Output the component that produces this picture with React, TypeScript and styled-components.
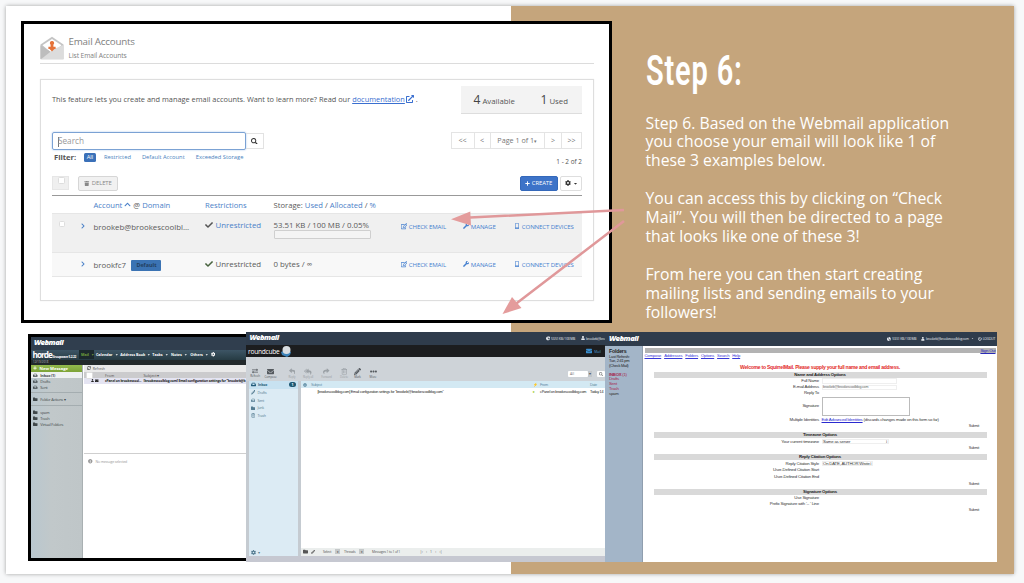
import React from "react";
import styled, { createGlobalStyle, css } from "styled-components";
import {
  FaSearch, FaTrash, FaPlus, FaCog, FaChevronRight, FaChevronUp, FaCheck, FaWrench, FaCaretDown,
  FaInbox, FaPencilAlt, FaFolder, FaUser, FaPowerOff, FaRegEdit, FaMobileAlt, FaExternalLinkAlt,
  FaSyncAlt, FaReply, FaReplyAll, FaShare, FaEllipsisH, FaEnvelope, FaInfoCircle, FaRegTrashAlt,
  FaExchangeAlt, FaChartPie,
} from "react-icons/fa";

const Global = createGlobalStyle`
  * { box-sizing: border-box; }
  html, body { margin: 0; padding: 0; }
  body { width: 1024px; height: 583px; overflow: hidden; background: #f7f8f9; font-family: "Open Sans", sans-serif; }
  svg { display: block; flex: none; }
`;

/* ---------- slide ---------- */
const Page = styled.div`
  height: 583px;
  padding: 6px 10px 9px 6px;
`;
const Slide = styled.main`
  position: relative;
  height: 568px;
  display: grid;
  grid-template-columns: 505px 1fr;
  background: #fff;
  box-shadow: 0 0 4px rgba(0, 0, 0, 0.35);
`;
const Notes = styled.section`
  grid-column: 2;
  background: #c5a57c;
  color: #fff;
  padding: 43.5px 0 0 134.5px;
`;
const StepTitle = styled.h1`
  margin: 0 0 8px;
  height: 56px;
  font: 600 42px/42px Roboto, sans-serif;
  letter-spacing: 1.2px;
  transform: scaleX(0.69);
  transform-origin: 0 0;
  white-space: nowrap;
`;
const Para = styled.p`
  margin: 0 0 19px;
  font-size: 15.74px;
  line-height: 18.95px;
  white-space: pre;
`;
const Shot = styled.section<{ $x: number; $y: number; $w: number; $h: number; $frame?: boolean; $open?: boolean }>`
  position: absolute;
  left: ${(p) => p.$x}px;
  top: ${(p) => p.$y}px;
  width: ${(p) => p.$w}px;
  height: ${(p) => p.$h}px;
  overflow: hidden;
  background: #fff;
  ${(p) => p.$frame && css`border: 3px solid #000;`}
  ${(p) => p.$open && css`border-right: 0;`}
`;
const Arrows = styled.svg`
  position: absolute;
  left: 0;
  top: 0;
  pointer-events: none;
`;

/* ---------- cPanel ---------- */
const Cpanel = styled.div`
  padding: 11.5px 15px 0 16px;
  color: #555;
  white-space: nowrap;
`;
const CpHeader = styled.header`
  display: flex;
  height: 28.5px;
  border-bottom: 1px solid #dcdcdc;
  gap: 4.5px;
`;
const CpTitle = styled.div`
  font-size: 9.8px;
  line-height: 11.5px;
  letter-spacing: -0.2px;
  color: #808080;
  small { display: block; font-size: 6.7px; line-height: 14px; margin-top: 1.5px; letter-spacing: -0.08px; }
`;
const Panel = styled.div`
  margin-top: 15px;
  height: 222px;
  border: 1px solid #dedede;
  padding: 6px 11px 0;
  box-shadow: 0 0 1px #e5e5e5;
`;
const Bar = styled.div<{ $h: number; $mt?: number }>`
  display: flex;
  align-items: center;
  justify-content: space-between;
  height: ${(p) => p.$h}px;
  margin-top: ${(p) => p.$mt ?? 0}px;
`;
const Group = styled.div<{ $gap?: number }>`
  display: flex;
  align-items: center;
  gap: ${(p) => p.$gap ?? 0}px;
`;
const Intro = styled.div`
  display: flex;
  align-items: center;
  font-size: 7.38px;
  height: 26px;
  margin-top: -1.5px;
  a { color: #3a6fd0; text-decoration: underline; margin: 0 1px 0 2px; }
  svg { color: #3a6fd0; margin-right: 2px; }
`;
const Stats = styled.div`
  display: flex;
  align-items: center;
  justify-content: space-between;
  width: 121.5px;
  height: 27.5px;
  padding: 0 14px 0 13px;
  background: #f3f3f3;
  border-bottom: 1px solid #ddd;
  font-size: 7.8px;
  b { font-weight: 400; font-size: 12px; margin-right: 2px; color: #444; }
  span { display: flex; align-items: baseline; }
`;
const Search = styled.div`
  width: 194px;
  height: 18px;
  border: 1.4px solid #7ba2d4;
  border-radius: 2px;
  box-shadow: 0 0 2px #9fc0ea;
  font-size: 8.2px;
  line-height: 15px;
  color: #999;
  padding-left: 4.5px;
  &::before { content: ""; display: inline-block; width: 1px; height: 10px; background: #777; vertical-align: middle; margin-right: -0.5px; }
`;
const SearchBtn = styled.div`
  display: grid;
  place-items: center;
  width: 18px;
  height: 16px;
  border: 1px solid #e2e2e2;
  border-left: 0;
  color: #333;
`;
const Pager = styled.div`
  display: grid;
  grid-template-columns: 22px 16px 54.5px 17px 20px;
  height: 17px;
  border: 1px solid #e4e4e4;
  font-size: 7.2px;
  line-height: 15px;
  text-align: center;
  color: #777;
  span + span { border-left: 1px solid #e4e4e4; }
  small { font-size: 5px; }
`;
const Filter = styled.div`
  display: flex;
  align-items: center;
  font-size: 5.75px;
  color: #4a7fbe;
  padding-left: 2px;
  b { font-size: 7.6px; color: #555; width: 30px; }
  i { font-style: normal; background: #3a70b8; color: #fff; border-radius: 1.5px; width: 12px; height: 9.5px; line-height: 9.5px; text-align: center; margin-right: 8px; }
  span { margin-right: 11px; }
`;
const Count = styled.span`margin-top: 9px; font-size: 6.4px;`;
const Box = styled.span`
  width: 6.5px;
  height: 6.5px;
  background: #fff;
  border: 0.5px solid #ddd;
  border-radius: 1.5px;
`;
const BoxCell = styled.div`
  width: 17px;
  height: 14px;
  background: #efefef;
  border: 1px solid #e6e6e6;
  padding: 0 0 0 5px;
  display: flex;
`;
const RowBox = styled.div`
  padding: 1px 0 0 6.5px;
  display: flex;
  height: 8px;
`;
const Btn = styled.div<{ $w: number; $kind?: "primary" | "muted" }>`
  display: flex;
  align-items: center;
  justify-content: center;
  gap: 2px;
  width: ${(p) => p.$w}px;
  height: 15px;
  border-radius: 2px;
  font-size: 5.9px;
  letter-spacing: -0.1px;
  border: 1px solid #dedede;
  color: #333;
  ${(p) => p.$kind === "primary" && css`background: #3d73c8; border-color: #3468ba; color: #fff;`}
  ${(p) => p.$kind === "muted" && css`background: #f1f1f1; border-color: #d6d6d6; color: #888;`}
`;
const Row = styled.div<{ $h: number; $bg?: string; $head?: boolean }>`
  display: grid;
  grid-template-columns: 28px 13.5px 111.5px 68.5px 127px 62.5px 51px 1fr;
  height: ${(p) => p.$h}px;
  background: ${(p) => p.$bg ?? "transparent"};
  font-size: ${(p) => (p.$head ? 7.65 : 7.85)}px;
  line-height: 10px;
  border-bottom: 0.5px solid #e6e6e6;
  padding-top: ${(p) => (p.$head ? 4 : 5.5)}px;
  ${(p) => p.$head && css`border-top: 1px solid #999;`}
  svg { margin-top: 1.5px; }
`;
const Cell = styled.div<{ $dy?: number; $blue?: boolean; $gap?: number }>`
  display: flex;
  gap: ${(p) => p.$gap ?? 2.5}px;
  padding-top: ${(p) => p.$dy ?? 0}px;
  height: ${(p) => 10 + (p.$dy ?? 0)}px;
  color: ${(p) => (p.$blue ? "#4a80c8" : "#5a5a5a")};
  em { font-style: normal; color: #4a80c8; }
`;
const Action = styled(Cell)`
  font-size: 6.1px;
  letter-spacing: -0.12px;
  color: #4680cf;
  gap: 1.8px;
`;
const Meter = styled.div`
  width: 97.5px;
  height: 9.5px;
  border: 1px solid #cfcfcf;
  border-radius: 1px;
  background: #f4f4f4;
`;
const Tag = styled.span`
  width: 30px;
  height: 11.5px;
  margin: 0 0 0 3px;
  background: #3b73b3;
  color: #23405f;
  font-size: 5.4px;
  font-weight: 700;
  line-height: 11px;
  text-align: center;
  border-radius: 1px;
`;

/* ---------- shared webmail pieces ---------- */
const Fill = styled.div<{ $h: number; $bg: string; $pad?: string; $c?: string; $fs?: number }>`
  display: flex;
  align-items: center;
  height: ${(p) => p.$h}px;
  background: ${(p) => p.$bg};
  padding: ${(p) => p.$pad ?? 0};
  color: ${(p) => p.$c ?? "#fff"};
  font-size: ${(p) => p.$fs ?? 4}px;
  white-space: nowrap;
`;
const Brand = styled.span`
  font: italic 800 7.6px/1 "Open Sans", sans-serif;
  letter-spacing: -0.5px;
  width: 29px;
  color: #fff;
`;
const Account = styled.div<{ $gap?: number }>`
  display: flex;
  align-items: center;
  gap: 1px;
  margin-left: ${(p) => p.$gap ?? 5}px;
  color: #e3e7ec;
  font-size: 3.4px;
  letter-spacing: -0.28px;
`;
const Push = styled.div`flex: 1;`;
const Split = styled.div<{ $side: number; $h: number }>`
  display: grid;
  grid-template-columns: ${(p) => p.$side}px 1fr;
  height: ${(p) => p.$h}px;
  white-space: nowrap;
`;

/* ---------- horde ---------- */
const HordeName = styled.span`
  font: 700 8.2px/9px "Open Sans", sans-serif;
  letter-spacing: -0.95px;
  width: 20px;
`;
const HordeVersion = styled.small`
  width: 26.5px;
  padding-top: 4px;
  font-size: 3.2px;
  font-weight: 700;
  letter-spacing: -0.26px;
`;
const HordeTab = styled.span<{ $w: number; $on?: boolean }>`
  display: flex;
  align-items: center;
  gap: 2px;
  width: ${(p) => p.$w}px;
  height: 9px;
  font-size: 3.7px;
  font-weight: 700;
  ${(p) => p.$on && css`background: #1c2a2d; color: #71a23c; padding-left: 2px; margin-right: 2px;`}
`;
const HordeSide = styled.aside`
  background: linear-gradient(90deg, #b9c7cf, #c1c8ca 40%, #bfc6c8);
  border-right: 1px solid #a9b0b2;
  color: #3f474a;
  font-size: 3.9px;
`;
const SideRow = styled.div<{ $h?: number; $on?: boolean; $rule?: boolean }>`
  display: flex;
  align-items: center;
  gap: 2.8px;
  height: ${(p) => p.$h ?? 6.3}px;
  padding-left: 2px;
  letter-spacing: -0.22px;
  background: ${(p) => (p.$on ? "#eef1f2" : "transparent")};
  ${(p) => p.$rule && css`border-bottom: 0.7px solid #a4adb0;`}
`;
const NewMessage = styled.div`
  display: flex;
  align-items: center;
  gap: 2.5px;
  height: 7.5px;
  padding-left: 2px;
  background: linear-gradient(#93b94d, #7da338);
  color: #fff;
  font-size: 4.2px;
  font-weight: 700;
`;
const HordeMain = styled.div`padding-left: 1px;`;
const HordeRow = styled.div<{ $h: number; $bg: string; $strong?: boolean }>`
  display: grid;
  grid-template-columns: 5px 14px 38.5px 1fr;
  align-items: center;
  height: ${(p) => p.$h}px;
  padding-left: 2px;
  background: ${(p) => p.$bg};
  color: ${(p) => (p.$strong ? "#222" : "#555")};
  font-size: ${(p) => (p.$strong ? 3.4 : 3.8)}px;
  font-weight: ${(p) => (p.$strong ? 700 : 400)};
  letter-spacing: ${(p) => (p.$strong ? -0.19 : 0)}px;
  span { display: flex; gap: 1px; }
`;
const Preview = styled.div`
  margin-top: 69.5px;
  border-top: 1.5px solid #cfcfcf;
  padding: 5px 0 0 4px;
  display: flex;
  align-items: center;
  gap: 3px;
  color: #999;
  font-size: 3.5px;
  letter-spacing: -0.15px;
`;

/* ---------- roundcube ---------- */
const RcBrand = styled.span`
  width: 31.5px;
  font-size: 6.6px;
  letter-spacing: -0.25px;
`;
const RcShell = styled.div`
  display: grid;
  grid-template-columns: 49.5px 1fr;
  column-gap: 3px;
  padding: 0 0 0 2.5px;
  height: 175px;
  background: #c5cbd1;
  white-space: nowrap;
`;
const RcSide = styled.aside`
  display: flex;
  flex-direction: column;
  background: #dcebf4;
  color: #557c91;
  font-size: 3.5px;
  letter-spacing: -0.15px;
`;
const RcFolder = styled.div<{ $on?: boolean }>`
  display: flex;
  align-items: center;
  gap: 2.5px;
  height: 7.7px;
  padding: 0 2px;
  ${(p) => p.$on && css`background: #c8e2f1; color: #205a7a; font-weight: 700;`}
  u { margin-left: auto; text-decoration: none; width: 7px; height: 5px; border-radius: 3px; background: #1d5873; color: #fff; text-align: center; line-height: 5px; font-size: 3.5px; }
`;
const RcTool = styled.div<{ $w: number; $on?: boolean }>`
  display: flex;
  flex-direction: column;
  align-items: center;
  gap: 1px;
  width: ${(p) => p.$w}px;
  color: ${(p) => (p.$on ? "#555a5f" : "#9ba1a6")};
  font-size: 3px;
  line-height: 3.5px;
  letter-spacing: -0.15px;
`;
const RcField = styled.div<{ $w: number }>`
  display: flex;
  align-items: center;
  width: ${(p) => p.$w}px;
  height: 6px;
  background: #fff;
  border-radius: 1px;
  color: #777;
  font-size: 3.6px;
  line-height: 6px;
  padding: 0 2px;
`;
const RcList = styled.div`
  display: flex;
  flex-direction: column;
  min-width: 0;
  background: #fff;
`;
const RcRow = styled.div<{ $head?: boolean }>`
  display: grid;
  grid-template-columns: 8px 6.5px 215px 7.5px 50px 1fr;
  align-items: center;
  height: 7px;
  padding-left: 2px;
  font: 3.75px "Liberation Sans", Arial, sans-serif;
  color: ${(p) => (p.$head ? "#5c8aa2" : "#222")};
  background: ${(p) => (p.$head ? "#d3e9f3" : "#fff")};
  b { color: #9aca2c; }
  span { letter-spacing: -0.24px; }
`;
const RcFooter = styled.div`
  display: grid;
  grid-template-columns: 8px 12px 12px 9px 15px 13px 48px 1fr;
  align-items: center;
  height: 8.5px;
  margin-top: auto;
  padding-left: 2px;
  background: #ebeeed;
  color: #555;
  font-size: 3.4px;
  letter-spacing: -0.2px;
  mark { width: 5px; background: #c5c9ca; color: #333; text-align: center; }
`;

/* ---------- squirrelmail ---------- */
const SqSide = styled.aside`
  background: #a3b5c8;
  border-right: 1px solid #8f9eae;
  padding: 2px 0 0 4px;
  font: 4px/4.5px "Liberation Sans", Arial, sans-serif;
  letter-spacing: -0.25px;
  color: #222;
  h4 { margin: 0; font-size: 5.3px; line-height: 7px; }
  p { margin: 0; white-space: pre; }
  ul { list-style: none; margin: 4.5px 0 0; padding: 0; line-height: 4.9px; font-size: 4.3px; color: #a62a4e; }
  li:last-child { color: #333; }
`;
const SqMain = styled.div`
  padding: 2.5px 1.5px 0 2px;
  font: 4.3px/6px "Liberation Sans", Arial, sans-serif;
  letter-spacing: -0.2px;
  color: #333;
`;
const SqTop = styled.div`
  background: #b3b3b3;
  height: 5.3px;
  line-height: 5.3px;
  text-align: right;
  color: #2a2ab8;
  text-decoration: underline;
`;
const SqMenu = styled.nav`
  display: flex;
  gap: 2.9px;
  height: 7px;
  color: #3838d8;
  font-size: 4.2px;
  letter-spacing: -0.17px;
  text-decoration: underline;
`;
const SqWelcome = styled.div`
  margin: 3.3px 0 2.5px 95.5px;
  color: #e22828;
  font-size: 5.1px;
  font-weight: 700;
  letter-spacing: -0.27px;
`;
const SqSection = styled.section<{ $h: number }>`
  width: 333px;
  height: ${(p) => p.$h}px;
  margin-left: 9px;
  header { background: #d9d9d9; height: 5.8px; line-height: 5.8px; text-align: center; font-weight: 700; color: #222; }
`;
const SqField = styled.div<{ $h?: number }>`
  display: grid;
  grid-template-columns: 165.5px 1fr;
  column-gap: 2.5px;
  align-items: center;
  height: ${(p) => p.$h ?? 6.3}px;
  label { text-align: right; }
  a { color: #2a2ad0; text-decoration: underline; }
`;
const Input = styled.span<{ $w: number; $area?: boolean }>`
  display: flex;
  justify-content: space-between;
  align-items: center;
  width: ${(p) => p.$w}px;
  height: ${(p) => (p.$area ? 19.5 : 5.5)}px;
  border: 1px solid ${(p) => (p.$area ? "#bbb" : "#efefef")};
  padding-left: 0.5px;
  line-height: 4px;
  small { font-size: 3.6px; color: #666; }
`;
const Submit = styled.div<{ $mt?: number }>`
  margin-top: ${(p) => p.$mt ?? 0}px;
  text-align: right;
  padding-right: 7.5px;
  font-size: 3.7px;
`;

function MailLogo() {
  return (
    <svg width="24" height="24" viewBox="0 0 24 24">
      <path d="M0.5 8.5 12 0.8l11.5 7.7v14.8h-23z" fill="#c4c4c4" />
      <path d="M2.5 9.2 12 3l9.5 6.2-9.5 8z" fill="#fff" />
      <path d="M0.5 9.5v13.6L11 16z" fill="#bdbdbd" />
      <path d="M1 23.3 14 13l9.5-4v14.3z" fill="#dcdcdc" />
      <path d="M12 5a2.1 2.1 0 0 1 1.4 3.7v2h2.2v2.2h-1.2L12 15.6l-2.4-2.7H8.4v-2.2h2.2v-2A2.1 2.1 0 0 1 12 5z" fill="#e5733a" />
    </svg>
  );
}

function Actions({ dy }: { dy: number }) {
  return (
    <>
      <Action $dy={dy}><FaRegEdit size={6.5} />CHECK EMAIL</Action>
      <Action $dy={dy}><FaWrench size={6} />MANAGE</Action>
      <Action $dy={dy}><FaMobileAlt size={6} />CONNECT DEVICES</Action>
    </>
  );
}

function EmailAccounts() {
  return (
    <Cpanel>
      <CpHeader><MailLogo /><CpTitle>Email Accounts<small>List Email Accounts</small></CpTitle></CpHeader>
      <Panel>
        <Bar $h={27.5}>
          <Intro>This feature lets you create and manage email accounts. Want to learn more? Read our <a>documentation</a><FaExternalLinkAlt size={8} />.</Intro>
          <Stats><span><b>4</b>Available</span><span><b>1</b>Used</span></Stats>
        </Bar>
        <Bar $h={18} $mt={18.3}>
          <Group><Search>Search</Search><SearchBtn><FaSearch size={6.5} /></SearchBtn></Group>
          <Pager><span>&lt;&lt;</span><span>&lt;</span><span>Page 1 of 1<small>▾</small></span><span>&gt;</span><span>&gt;&gt;</span></Pager>
        </Bar>
        <Bar $h={10} $mt={2.7}>
          <Filter><b>Filter:</b><i>All</i><span>Restricted</span><span>Default Account</span><span>Exceeded Storage</span></Filter>
          <Count>1 - 2 of 2</Count>
        </Bar>
        <Bar $h={15} $mt={13.3}>
          <Group $gap={9}><BoxCell><Box /></BoxCell><Btn $w={40} $kind="muted"><FaTrash size={5.5} />DELETE</Btn></Group>
          <Group $gap={2.5}><Btn $w={38} $kind="primary"><FaPlus size={5} />CREATE</Btn><Btn $w={22}><FaCog size={6} /><FaCaretDown size={5} /></Btn></Group>
        </Bar>
        <Bar $h={4.2} />
        <Row $h={19.5} $head>
          <span /><span />
          <Cell $gap={2}><em>Account</em><em><FaChevronUp size={7} /></em>@ <em>Domain</em></Cell>
          <Cell $blue>Restrictions</Cell>
          <Cell $gap={2}>Storage: <em>Used</em> / <em>Allocated</em> / <em>%</em></Cell>
        </Row>
        <Row $h={39} $bg="#f0f0f0">
          <RowBox><Box /></RowBox>
          <Cell $dy={2} $blue><FaChevronRight size={6} /></Cell>
          <Cell $dy={2}>brookeb@brookescoolbl...</Cell>
          <Cell $blue><FaCheck size={8} color="#555" />Unrestricted</Cell>
          <div><Cell>53.51 KB / 100 MB / 0.05%</Cell><Meter /></div>
          <Actions dy={2} />
        </Row>
        <Row $h={24} $bg="#f8f8f8">
          <span />
          <Cell $dy={1} $blue><FaChevronRight size={6} /></Cell>
          <Cell $dy={0.7}>brookfc7 <Tag>Default</Tag></Cell>
          <Cell><FaCheck size={8} color="#48633f" />Unrestricted</Cell>
          <Cell>0 bytes / ∞</Cell>
          <Actions dy={1} />
        </Row>
      </Panel>
    </Cpanel>
  );
}

const hordeTabs = [["Calendar", 24.3], ["Address Book", 32], ["Tasks", 18.6], ["Notes", 19.4], ["Others", 20.6]] as const;

function Horde() {
  return (
    <>
      <Fill $h={12.5} $bg="#303e4e" $pad="0 3px"><Brand>Webmail</Brand></Fill>
      <Fill $h={10} $bg="linear-gradient(#3d5565, #263b43)" $pad="0 0 0 1.5px">
        <HordeName>horde</HordeName><HordeVersion>Groupware 5.2.22</HordeVersion>
        <HordeTab $w={15} $on>Mail <FaCaretDown size={3.5} /></HordeTab>
        {hordeTabs.map(([t, w]) => (
          <HordeTab key={t} $w={w}>{t}<FaCaretDown size={3.5} /></HordeTab>
        ))}
        <FaCog size={4.5} />
      </Fill>
      <Fill $h={5} $bg="#23292b" $pad="0 2px" $c="#b9bfc1" $fs={2.9}>12/19/2018</Fill>
      <Split $side={52} $h={193}>
        <HordeSide>
          <NewMessage><FaPlus size={4} />New Message</NewMessage>
          <SideRow $on><FaInbox size={4.5} /><b>Inbox (1)</b></SideRow>
          <SideRow><FaInbox size={4.5} />Drafts</SideRow>
          <SideRow><FaInbox size={4.5} />Sent</SideRow>
          <SideRow $h={2.5} $rule />
          <SideRow $h={12}><FaFolder size={4.5} />Folder Actions ▾</SideRow>
          <SideRow $h={0.7} $rule />
          <SideRow $h={2.5} />
          <SideRow><FaFolder size={4.5} />spam</SideRow>
          <SideRow><FaFolder size={4.5} />Trash</SideRow>
          <SideRow><FaFolder size={4.5} />Virtual Folders</SideRow>
        </HordeSide>
        <HordeMain>
          <Fill $h={7.5} $bg="#e9e9e9" $c="#555" $fs={3.4} $pad="0 0 0 3px"><FaSyncAlt size={4} />&nbsp; Refresh</Fill>
          <HordeRow $h={6} $bg="#cbcbcd"><Box /><span /><span>From</span><span>Subject ▾</span></HordeRow>
          <HordeRow $h={5.5} $bg="#e4e4f2" $strong><span /><span><FaUser size={3} /><FaEnvelope size={3.5} /></span><span>cPanel on brookescool...</span><span>[brookescoolblog.com] Email configuration settings for “brookeb@b</span></HordeRow>
          <Preview><FaInfoCircle size={4.5} />No message selected</Preview>
        </HordeMain>
      </Split>
    </>
  );
}

function Roundcube() {
  return (
    <>
      <Fill $h={13.5} $bg="#2f3c4c" $pad="0 0 0 3.5px">
        <Brand>Webmail</Brand>
        <Account $gap={267}><FaChartPie size={4.5} />53.51 KB / 100 MB</Account>
        <Account $gap={6}><FaUser size={4} />brookeb@bro</Account>
      </Fill>
      <Fill $h={12} $bg="#1c1d1f" $pad="0 4px 0 2px">
        <RcBrand>roundcube</RcBrand>
        <svg width="12" height="12" viewBox="0 0 12 12"><path d="M1 7l5-2 5 2-1 3-3 2-5-2z" fill="#3d83b9" /><circle cx="6.5" cy="5" r="4" fill="#d9dde1" /></svg>
        <Push />
        <FaEnvelope size={6} color="#3a8fd0" /><Fill as="span" $h={6} $bg="none" $fs={3.5} $c="#4b9bd4" $pad="0 0 0 2px">Mail</Fill>
      </Fill>
      <Fill $h={24} $bg="#ced3d8" $pad="9px 0 0 0">
        <RcTool $w={18} $on><FaExchangeAlt size={6} />Refresh</RcTool>
        <RcTool $w={13} $on><FaEnvelope size={7} />Compose</RcTool>
        <RcTool $w={30}><FaReply size={6.5} />Reply</RcTool>
        <RcTool $w={2}><FaReplyAll size={7.5} />Reply all</RcTool>
        <RcTool $w={35}><FaShare size={6.5} />Forward</RcTool>
        <RcTool $w={0}><FaRegTrashAlt size={6.5} />Delete</RcTool>
        <RcTool $w={27} $on><FaPencilAlt size={7} />Mark</RcTool>
        <RcTool $w={4} $on><FaEllipsisH size={7} />More</RcTool>
        <Push />
        <RcField $w={20}>All</RcField><Fill as="span" $h={6} $bg="#c1c6ca" $c="#555" $fs={3.5} $pad="0 1px">▾</Fill>
        <Fill as="span" $h={6} $bg="none" $pad="0 0 0 5px"><RcField $w={8}><FaSearch size={4} /></RcField></Fill>
      </Fill>
      <RcShell>
        <RcSide>
          <RcFolder $on><FaInbox size={5} />Inbox<u>1</u></RcFolder>
          <RcFolder><FaPencilAlt size={4.5} />Drafts</RcFolder>
          <RcFolder><FaInbox size={4.5} />Sent</RcFolder>
          <RcFolder><FaFolder size={4.5} />Junk</RcFolder>
          <RcFolder><FaRegTrashAlt size={4.5} />Trash</RcFolder>
          <Push />
          <RcFolder><FaCog size={5} />▾</RcFolder>
        </RcSide>
        <RcList>
          <RcRow $head><FaCog size={4} /><span>Subject</span><span /><b>⚡</b><span>From</span><span>Date</span></RcRow>
          <RcRow><span /><span /><span>[brookescoolblog.com] Email configuration settings for “brookeb@brookescoolblog.com”</span><b>●</b><span>cPanel on brookescoolblog.com</span><span>Today 14</span></RcRow>
          <RcFooter>
            <FaFolder size={5} /><FaPencilAlt size={4} /><span>Select</span><mark>▾</mark><span>Threads</span><mark>▾</mark><span>Messages 1 to 1 of 1</span><span>|‹ &nbsp;&nbsp;&nbsp; ‹ &nbsp;&nbsp;&nbsp; 1 &nbsp;&nbsp;&nbsp; › &nbsp;&nbsp;&nbsp; ›|</span>
          </RcFooter>
        </RcList>
      </RcShell>
      <Fill $h={6} $bg="#c6c8d1" />
    </>
  );
}

function SquirrelMail() {
  return (
    <>
      <Fill $h={13.5} $bg="#2f3c4c" $pad="0 2px 0 4px">
        <Brand>Webmail</Brand><Push />
        <Account><FaChartPie size={4} />53.51 KB / 100 MB</Account>
        <Account $gap={5}><FaUser size={3.7} />brookeb@brookescoolblog.com</Account>
        <Account $gap={2.5}><FaCaretDown size={3} /></Account>
        <Account $gap={4}><FaPowerOff size={3.7} />LOGOUT</Account>
      </Fill>
      <Split $side={37.5} $h={216}>
        <SqSide>
          <h4>Folders</h4>
          <p>{"Last Refresh:\nTue, 2:41 pm\n(Check Mail)"}</p>
          <ul><li><b>INBOX</b> (1)</li><li>Drafts</li><li>Sent</li><li>Trash</li><li>spam</li></ul>
        </SqSide>
        <SqMain>
          <SqTop>Sign Out</SqTop>
          <SqMenu>{["Compose", "Addresses", "Folders", "Options", "Search", "Help"].map((m) => <span key={m}>{m}</span>)}</SqMenu>
          <SqWelcome>Welcome to SquirrelMail. Please supply your full name and email address.</SqWelcome>
          <SqSection $h={60}>
            <header>Name and Address Options</header>
            <SqField><label>Full Name</label><Input $w={75} /></SqField>
            <SqField><label>E-mail Address</label><Input $w={75}><small>brookeb@brookescoolblog.com</small></Input></SqField>
            <SqField $h={6}><label>Reply To</label></SqField>
            <SqField $h={20}><label>Signature</label><Input $w={88.5} $area /></SqField>
            <SqField $h={7}><label>Multiple Identities</label><span><a>Edit Advanced Identities</a> (discards changes made on this form so far)</span></SqField>
            <Submit>Submit</Submit>
          </SqSection>
          <SqSection $h={22.3}>
            <header>Timezone Options</header>
            <SqField $h={7.5}><label>Your current timezone</label><Input $w={67}>Same as server<span>↕</span></Input></SqField>
            <Submit>Submit</Submit>
          </SqSection>
          <SqSection $h={34.7}>
            <header>Reply Citation Options</header>
            <SqField $h={7}><label>Reply Citation Style</label><Input $w={51}>On DATE, AUTHOR Wrote<span>↕</span></Input></SqField>
            <SqField><label>User-Defined Citation Start</label></SqField>
            <SqField><label>User-Defined Citation End</label></SqField>
            <Submit $mt={0.8}>Submit</Submit>
          </SqSection>
          <SqSection $h={25}>
            <header>Signature Options</header>
            <SqField><label>Use Signature</label></SqField>
            <SqField><label>Prefix Signature with '-- ' Line</label></SqField>
            <Submit>Submit</Submit>
          </SqSection>
        </SqMain>
      </Split>
    </>
  );
}

export default function App() {
  return (
    <Page>
      <Global />
      <Slide>
        <Notes>
          <StepTitle>Step 6:</StepTitle>
          <Para>{"Step 6. Based on the Webmail application\nyou choose your email will look like 1 of\nthese 3 examples below."}</Para>
          <Para>{"You can access this by clicking on “Check\nMail”. You will then be directed to a page\nthat looks like one of these 3!"}</Para>
          <Para>{"From here you can then start creating\nmailing lists and sending emails to your\nfollowers!"}</Para>
        </Notes>
        <Shot $x={15} $y={15} $w={591} $h={302} $frame><EmailAccounts /></Shot>
        <Shot $x={22} $y={328} $w={218} $h={227} $frame $open><Horde /></Shot>
        <Shot $x={240} $y={325.5} $w={359} $h={230.5}><Roundcube /></Shot>
        <Shot $x={599} $y={326} $w={392} $h={229.5}><SquirrelMail /></Shot>
        <Arrows width="1008" height="568" viewBox="6 6 1008 568" fill="#e49c9c" stroke="none">
          <path d="M624 210 470 217.5M624 221 515 304.5" stroke="#e0989a" strokeWidth="2.5" fill="none" />
          <path d="M451 219.2 470.3 211.5 471 225.5zM502.5 314 512 297 521.5 308z" />
        </Arrows>
      </Slide>
    </Page>
  );
}
